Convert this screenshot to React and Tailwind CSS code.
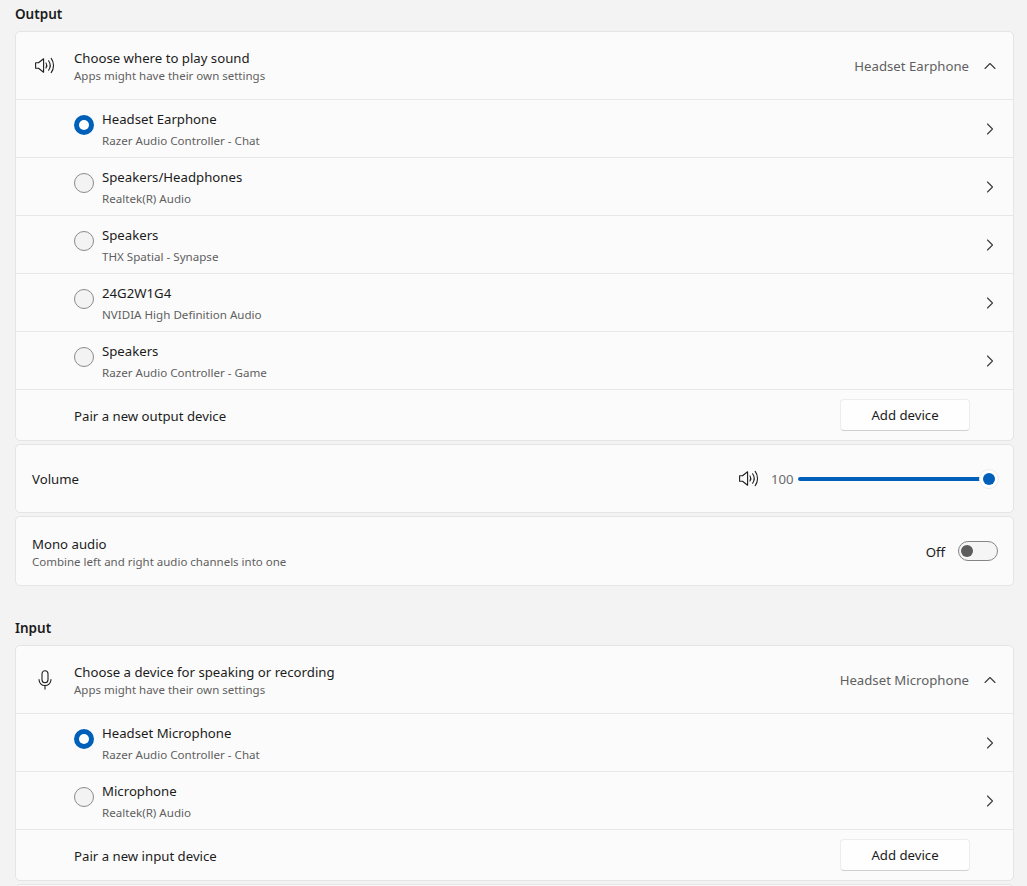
import { ChevronRight, ChevronUp } from "lucide-react";

const font = "font-['Noto_Sans',sans-serif]";

const outputDevices = [
  { name: "Headset Earphone", sub: "Razer Audio Controller - Chat", active: true },
  { name: "Speakers/Headphones", sub: "Realtek(R) Audio" },
  { name: "Speakers", sub: "THX Spatial - Synapse" },
  { name: "24G2W1G4", sub: "NVIDIA High Definition Audio" },
  { name: "Speakers", sub: "Razer Audio Controller - Game" },
];

const inputDevices = [
  { name: "Headset Microphone", sub: "Razer Audio Controller - Chat", active: true },
  { name: "Microphone", sub: "Realtek(R) Audio" },
];

function SpeakerIcon() {
  return (
    <svg className="w-5 h-[17px]" viewBox="0 0 20 17" fill="none" stroke="#1f1f1f" strokeWidth="1.1" strokeLinecap="round" strokeLinejoin="round">
      <path d="M0.6 5.8h2.9L8.6 1.8v13.4L3.5 11.2H0.6z" />
      <path d="M11 6c1 1.5 1 3.5 0 5" />
      <path d="M13.6 3.8c1.9 2.7 1.9 6.7 0 9.4" />
      <path d="M16.2 1.4c3.1 4 3.1 10.2 0 14.2" />
    </svg>
  );
}

function MicIcon() {
  return (
    <svg className="w-[14px] h-[20px]" viewBox="0 0 14 20" fill="none" stroke="#1f1f1f" strokeWidth="1.1" strokeLinecap="round">
      <rect x="4" y="0.8" width="6" height="12" rx="3" />
      <path d="M1 9.5c0 3.4 2.6 6 6 6s6-2.6 6-6" />
      <path d="M7 15.5v3.6" />
    </svg>
  );
}

function Radio({ active }) {
  if (active) {
    return (
      <div className="w-5 h-5 mb-2 rounded-full bg-[#005fb8] flex items-center justify-center shrink-0">
        <div className="w-[10px] h-[10px] rounded-full bg-white" />
      </div>
    );
  }
  return <div className="w-5 h-5 mb-2 rounded-full border border-[#8a8a8a] bg-[#f3f3f3] shrink-0" />;
}

function DeviceRow({ device }) {
  return (
    <div className="h-[58px] border-t border-[#e8e8e8] flex items-center pl-[58px] pr-[13px]">
      <Radio active={device.active} />
      <div className="ml-2 flex-1 flex flex-col mt-[2px]">
        <span className="text-[13.2px] leading-[18px] text-[#1b1b1b]">{device.name}</span>
        <span className="text-[11.6px] leading-[16px] mt-[5px] text-[#5f5f5f]">{device.sub}</span>
      </div>
      <ChevronRight className="w-5 h-5 text-[#3a3a3a]" strokeWidth={1.3} />
    </div>
  );
}

function AddDeviceButton() {
  return (
    <button className="w-[130px] h-8 pt-px rounded bg-[#fefefe] border border-[#ececec] border-b-[#d0d0d0] text-[13.2px] text-[#1b1b1b]">
      Add device
    </button>
  );
}

function DeviceCard({ icon, title, current, devices, pairLabel }) {
  return (
    <div className="ml-[15px] mr-[13px] rounded-[5px] border border-[#e5e5e5] bg-[#fbfbfb]">
      <div className="h-[67px] flex items-center pr-[13px]">
        <div className="w-[58px] flex justify-center">{icon}</div>
        <div className="flex-1 flex flex-col">
          <span className="text-[13.2px] leading-[18px] text-[#1b1b1b]">{title}</span>
          <span className="text-[11.5px] leading-[15px] mt-px text-[#5f5f5f]">Apps might have their own settings</span>
        </div>
        <span className="text-[13.2px] text-[#5f5f5f] mr-[11px] mt-[3px]">{current}</span>
        <ChevronUp className="w-5 h-5 text-[#3a3a3a] mt-px" strokeWidth={1.3} />
      </div>
      {devices.map((d) => (
        <DeviceRow key={d.name + d.sub} device={d} />
      ))}
      <div className="h-[51px] border-t border-[#e8e8e8] flex items-center justify-between pl-[58px] pr-[43px]">
        <span className="text-[13.2px] text-[#1b1b1b] mt-[3px]">{pairLabel}</span>
        <AddDeviceButton />
      </div>
    </div>
  );
}

export default function App() {
  return (
    <div className={`${font} h-[886px] overflow-hidden bg-[#f3f3f3] pt-[5px]`}>
      <h2 className="text-[13.5px] leading-[18px] font-semibold text-[#1b1b1b] pl-[15px] mb-2">Output</h2>
      <DeviceCard
        icon={<SpeakerIcon />}
        title="Choose where to play sound"
        current="Headset Earphone"
        devices={outputDevices}
        pairLabel="Pair a new output device"
      />

      <div className="ml-[15px] mr-[13px] mt-[3px] h-[69px] rounded-[5px] border border-[#e5e5e5] bg-[#fbfbfb] flex items-center pl-4 pr-[14px]">
        <span className="flex-1 text-[13.2px] text-[#1b1b1b] mt-[2px]">Volume</span>
        <SpeakerIcon />
        <span className="ml-[12px] w-[27px] text-[13.2px] text-[#6b6b6b] mt-[2px]">100</span>
        <div className="flex items-center">
          <div className="w-[183px] h-1 rounded-full bg-[#005fb8]" />
          <div className="w-5 h-5 rounded-full bg-white border border-[#ececec] flex items-center justify-center -ml-[2px]">
            <div className="w-3 h-3 rounded-full bg-[#005fb8]" />
          </div>
        </div>
      </div>

      <div className="ml-[15px] mr-[13px] mt-[3px] h-[70px] rounded-[5px] border border-[#e5e5e5] bg-[#fbfbfb] flex items-center pl-4 pr-[15px]">
        <div className="flex-1 flex flex-col mt-[2px]">
          <span className="text-[13.2px] leading-[18px] text-[#1b1b1b]">Mono audio</span>
          <span className="text-[11.5px] leading-[15px] mt-px text-[#5f5f5f]">Combine left and right audio channels into one</span>
        </div>
        <span className="text-[13.2px] text-[#1b1b1b] mr-[13px] mt-[3px]">Off</span>
        <div className="w-10 h-5 rounded-full border border-[#858585] bg-[#f5f5f5] flex items-center pl-[2px]">
          <div className="w-3 h-3 rounded-full bg-[#5d5d5d]" />
        </div>
      </div>

      <h2 className="text-[13.5px] leading-[18px] font-semibold text-[#1b1b1b] pl-[15px] mt-[33px] mb-2">Input</h2>
      <DeviceCard
        icon={<MicIcon />}
        title="Choose a device for speaking or recording"
        current="Headset Microphone"
        devices={inputDevices}
        pairLabel="Pair a new input device"
      />
      <div className="ml-[15px] mr-[13px] mt-[3px] h-[40px] rounded-[5px] border border-[#e5e5e5] bg-[#fbfbfb]" />
    </div>
  );
}
